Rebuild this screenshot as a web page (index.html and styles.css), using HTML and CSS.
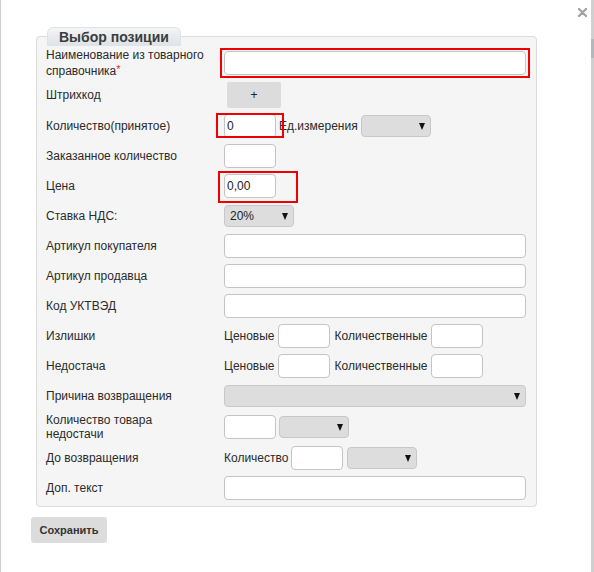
FILE: index.html
```html
<!DOCTYPE html>
<html lang="ru">
<head>
<meta charset="utf-8">
<link rel="stylesheet" href="styles.css">
</head>
<body>
<div class="page">
  <div class="dialog">
    <span class="close"><svg width="9" height="9" viewBox="0 0 9 9"><path d="M1 1L8 8M8 1L1 8" stroke="#a3a3a3" stroke-width="2.4" stroke-linecap="round"/></svg></span>
    <fieldset class="box">
      <legend class="legend">Выбор позиции</legend>

      <div class="row row-32">
        <div class="label">Наименование из товарного<br>справочника<span class="req">*</span></div>
        <div class="ctrl"><span class="mk"><input class="inp wide" type="text"><span class="mark mark-name"></span></span></div>
      </div>

      <div class="row row-32">
        <div class="label">Штрихкод</div>
        <div class="ctrl"><button class="btn-plus" type="button">+</button></div>
      </div>

      <div class="row">
        <div class="label">Количество(принятое)</div>
        <div class="ctrl">
          <span class="mk"><input class="inp" type="text" value="0"><span class="mark mark-qty"></span></span>
          <span class="txt">Ед.измерения</span>
          <span class="sel"><span></span><span class="caret"></span></span>
        </div>
      </div>

      <div class="row">
        <div class="label">Заказанное количество</div>
        <div class="ctrl"><input class="inp" type="text"></div>
      </div>

      <div class="row">
        <div class="label">Цена</div>
        <div class="ctrl"><span class="mk"><input class="inp" type="text" value="0,00"><span class="mark mark-price"></span></span></div>
      </div>

      <div class="row">
        <div class="label">Ставка НДС:</div>
        <div class="ctrl"><span class="sel"><span>20%</span><span class="caret"></span></span></div>
      </div>

      <div class="row">
        <div class="label">Артикул покупателя</div>
        <div class="ctrl"><input class="inp wide" type="text"></div>
      </div>

      <div class="row">
        <div class="label">Артикул продавца</div>
        <div class="ctrl"><input class="inp wide" type="text"></div>
      </div>

      <div class="row">
        <div class="label">Код УКТВЭД</div>
        <div class="ctrl"><input class="inp wide" type="text"></div>
      </div>

      <div class="row">
        <div class="label">Излишки</div>
        <div class="ctrl">
          <span class="txt">Ценовые</span><input class="inp" type="text">
          <span class="txt txt-gap">Количественные</span><input class="inp" type="text">
        </div>
      </div>

      <div class="row">
        <div class="label">Недостача</div>
        <div class="ctrl">
          <span class="txt">Ценовые</span><input class="inp" type="text">
          <span class="txt txt-gap">Количественные</span><input class="inp" type="text">
        </div>
      </div>

      <div class="row">
        <div class="label">Причина возвращения</div>
        <div class="ctrl"><span class="sel sel-wide"><span></span><span class="caret"></span></span></div>
      </div>

      <div class="row row-32">
        <div class="label">Количество товара<br>недостачи</div>
        <div class="ctrl">
          <input class="inp" type="text">
          <span class="sel"><span></span><span class="caret"></span></span>
        </div>
      </div>

      <div class="row">
        <div class="label">До возвращения</div>
        <div class="ctrl">
          <span class="txt">Количество</span><input class="inp" type="text">
          <span class="sel sel-gap"><span></span><span class="caret"></span></span>
        </div>
      </div>

      <div class="row">
        <div class="label">Доп. текст</div>
        <div class="ctrl"><input class="inp wide" type="text"></div>
      </div>
    </fieldset>

    <button class="btn-save" type="button">Сохранить</button>
  </div>
  <div class="strip"></div>
</div>
</body>
</html>
```

FILE: styles.css
```css
* {
  box-sizing: border-box;
}

html, body {
  margin: 0;
  padding: 0;
}

body {
  width: 594px;
  height: 572px;
  overflow: hidden;
  background: #fff;
  font-family: "Liberation Sans", Arial, sans-serif;
  font-size: 12px;
  color: #2b2b2b;
}

.page {
  display: flex;
  height: 572px;
}

.dialog {
  position: relative;
  width: 591px;
  height: 572px;
  background: #fff;
  border-left: 1px solid #cdcdcd;
  padding: 27px 0 0 30px;
}

.strip {
  width: 3px;
  height: 572px;
  background: linear-gradient(to bottom, #d0d0d0 0, #d0d0d0 39px, #b4b8bb 39px, #b4b8bb 58px, #cfcfcf 58px);
}

.close {
  position: absolute;
  top: 8px;
  right: 4px;
  width: 9px;
  height: 9px;
  line-height: 0;
}

.box {
  width: 501px;
  margin: 0 0 0 5px;
  padding: 1px 9px 3px;
  border: 1px solid #dcdcdc;
  border-radius: 4px;
  background: #f5f5f5;
  min-width: 0;
}

.legend {
  margin-left: 1px;
  padding: 0 11px 0 11px;
  height: 19px;
  line-height: 19px;
  font-size: 14px;
  font-weight: bold;
  color: #3c3c3c;
  border: 1px solid #dfe3e5;
  border-bottom: none;
  border-radius: 6px 6px 0 0;
  background: linear-gradient(to bottom, #f4f5f6 0%, #e6eaec 55%, #dde3e6 100%);
}

.row {
  display: flex;
  align-items: center;
  height: 30px;
}

.row-32 {
  height: 32px;
}

.label {
  width: 178px;
  flex: none;
  line-height: 14px;
}

.req {
  color: #e8262b;
  font-size: 11px;
  vertical-align: 2px;
}

.ctrl {
  display: flex;
  align-items: center;
  gap: 3px;
}

.txt {
  white-space: nowrap;
}

.txt-gap {
  margin-left: 2px;
}

.inp {
  width: 52px;
  height: 24px;
  margin: 0;
  padding: 0 2px;
  border: 1px solid #c4c4c4;
  border-radius: 4px;
  background: #fff;
  font-family: "Liberation Sans", Arial, sans-serif;
  font-size: 12px;
  color: #222;
  outline: none;
}

.inp.wide {
  width: 302px;
}

.mk {
  position: relative;
  display: inline-flex;
}

.mark {
  position: absolute;
  border: 2px solid #ee0000;
  pointer-events: none;
}

.mark-name {
  left: -4px;
  right: -4px;
  top: -3px;
  bottom: -3px;
}

.mark-qty {
  left: -8px;
  right: -8px;
  top: -1px;
  bottom: 0;
}

.mark-price {
  left: -6px;
  right: -22px;
  top: -3px;
  bottom: -5px;
}

.sel {
  display: flex;
  align-items: center;
  justify-content: space-between;
  width: 70px;
  height: 22px;
  padding: 0 5px 0 5px;
  border: 1px solid #c8c8c8;
  border-radius: 4px;
  background: #dddddd;
  color: #222;
  font-size: 12px;
}

.sel-wide {
  width: 302px;
}

.sel-gap {
  margin-left: 1px;
}

.caret {
  width: 0;
  height: 0;
  border-left: 3.5px solid transparent;
  border-right: 3.5px solid transparent;
  border-top: 7px solid #111;
}

.btn-plus {
  width: 54px;
  height: 26px;
  margin: 0 0 0 3px;
  padding: 0;
  border: none;
  border-radius: 2px;
  background: #dcdcdc;
  font-family: "Liberation Sans", Arial, sans-serif;
  font-size: 12px;
  color: #222;
}

.btn-save {
  display: block;
  width: 76px;
  height: 26px;
  margin: 10px 0 0 0;
  padding: 0;
  border: none;
  border-radius: 3px;
  background: #dcdcdc;
  font-family: "Liberation Sans", Arial, sans-serif;
  font-size: 11px;
  font-weight: bold;
  color: #333;
}
```
